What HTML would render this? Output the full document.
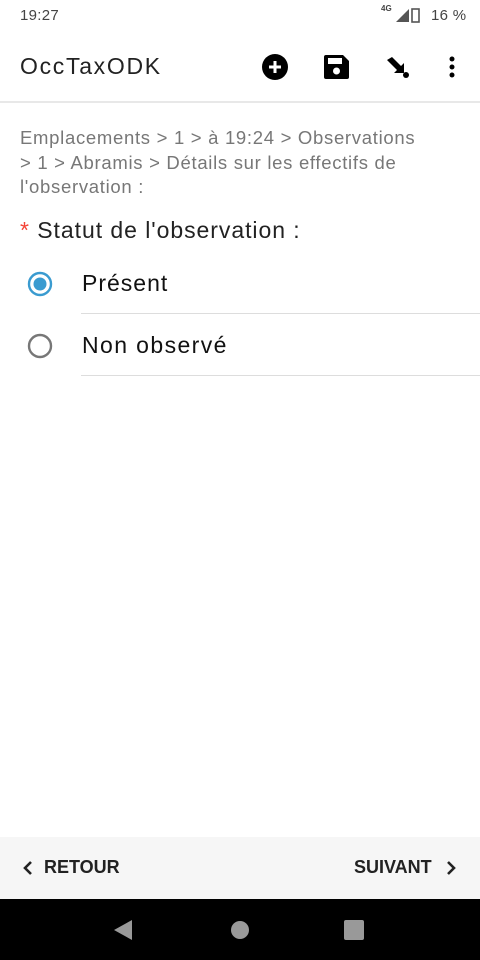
<!DOCTYPE html>
<html><head><meta charset="utf-8"><style>
body{margin:0;width:480px;height:960px;position:relative;background:#fff;font-family:"Liberation Sans",sans-serif;overflow:hidden}
.a{position:absolute;white-space:nowrap}
</style></head><body>
<div class="a" style="left:20px;top:7px;font-size:15px;color:#444;letter-spacing:0.3px">19:27</div>
<div class="a" style="left:381px;top:4px;font-size:8px;color:#444;font-weight:bold">4G</div>
<svg class="a" style="left:380px;top:4px" width="60" height="22"><polygon points="16,18 29,18 29,5" fill="#555"/><rect x="32" y="5" width="7" height="13" fill="none" stroke="#555" stroke-width="1.6"/></svg>
<div class="a" style="left:431px;top:7px;font-size:15px;color:#444;letter-spacing:0.3px">16 %</div>
<div class="a" style="left:20px;top:53px;font-size:23px;color:#222;letter-spacing:1.7px">OccTaxODK</div>
<svg class="a" style="left:262px;top:54px" width="26" height="26"><circle cx="13" cy="13" r="13" fill="#000"/><path d="M13 7v12M7 13h12" stroke="#fff" stroke-width="3"/></svg>
<svg class="a" style="left:324px;top:55px" width="26" height="24"><path d="M0 2a2 2 0 0 1 2-2h17l6 6v16a2 2 0 0 1-2 2H2a2 2 0 0 1-2-2z" fill="#000"/><rect x="4" y="3" width="14" height="6" fill="#fff"/><circle cx="12.5" cy="16" r="3.5" fill="#fff"/></svg>
<svg class="a" style="left:385px;top:55px" width="26" height="26"><path d="M2 5l5-3 9 9 3-3 0 10-10 0 3-3z" fill="#000"/><circle cx="21" cy="20" r="3" fill="#000"/></svg>
<svg class="a" style="left:446px;top:55px" width="12" height="24"><circle cx="6" cy="4" r="2.5"/><circle cx="6" cy="12" r="2.5"/><circle cx="6" cy="20" r="2.5"/></svg>
<div class="a" style="left:0;top:101px;width:480px;height:2px;background:#e8e8e8"></div>
<div class="a" style="left:20px;top:126px;font-size:18.5px;line-height:24.5px;color:#777;letter-spacing:0.7px">Emplacements &gt; 1 &gt; à 19:24 &gt; Observations<br>&gt; 1 &gt; Abramis &gt; Détails sur les effectifs de<br>l'observation :</div>
<div class="a" style="left:20px;top:217px;font-size:23px;color:#222;letter-spacing:0.95px"><span style="color:#f44336">*</span> Statut de l'observation :</div>
<svg class="a" style="left:27px;top:271px" width="26" height="26"><circle cx="13" cy="13" r="11" fill="none" stroke="#3a9bd0" stroke-width="2.4"/><circle cx="13" cy="13" r="6.5" fill="#3a9bd0"/></svg>
<div class="a" style="left:82px;top:270px;font-size:23px;color:#111;letter-spacing:1px">Présent</div>
<div class="a" style="left:81px;top:313px;width:399px;height:1px;background:#ddd"></div>
<svg class="a" style="left:27px;top:333px" width="26" height="26"><circle cx="13" cy="13" r="11" fill="none" stroke="#777" stroke-width="2.4"/></svg>
<div class="a" style="left:82px;top:332px;font-size:23px;color:#111;letter-spacing:1.4px">Non observé</div>
<div class="a" style="left:81px;top:375px;width:399px;height:1px;background:#ddd"></div>
<div class="a" style="left:0;top:837px;width:480px;height:62px;background:#f6f6f6"></div>
<svg class="a" style="left:22px;top:860px" width="12" height="16"><path d="M9 2L3 8l6 6" fill="none" stroke="#222" stroke-width="2.6"/></svg>
<div class="a" style="left:44px;top:857px;font-size:18px;font-weight:bold;color:#222">RETOUR</div>
<div class="a" style="left:354px;top:857px;font-size:18px;font-weight:bold;color:#222">SUIVANT</div>
<svg class="a" style="left:445px;top:860px" width="12" height="16"><path d="M3 2l6 6-6 6" fill="none" stroke="#222" stroke-width="2.6"/></svg>
<div class="a" style="left:0;top:899px;width:480px;height:61px;background:#000"></div>
<svg class="a" style="left:113px;top:919px" width="20" height="22"><polygon points="19,1 19,21 1,11" fill="#999"/></svg>
<div class="a" style="left:231px;top:921px;width:18px;height:18px;border-radius:50%;background:#999"></div>
<div class="a" style="left:344px;top:920px;width:20px;height:20px;border-radius:2px;background:#999"></div>
</body></html>
